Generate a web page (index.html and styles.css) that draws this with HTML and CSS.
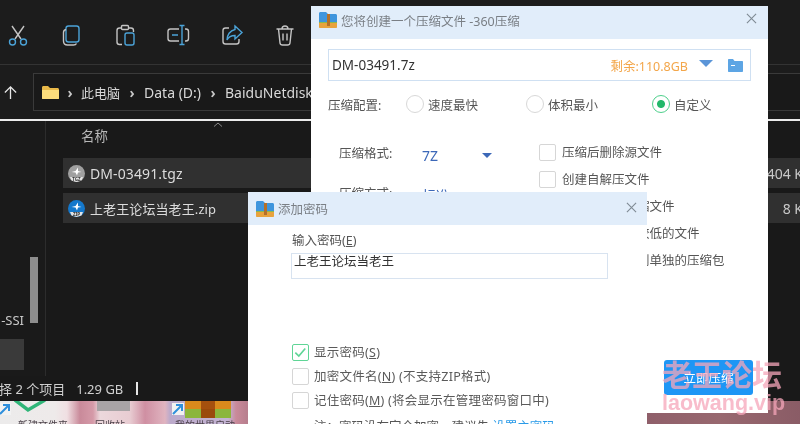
FILE: index.html
```html
<!DOCTYPE html>
<html lang="zh-CN">
<head>
  <meta charset="UTF-8">
  <title>添加密码</title>
  <link rel="stylesheet" href="styles.css">
</head>
<body>

  <div class="desktop">

    <!-- wallpaper and desktop shortcuts -->
    <svg class="wall-check" viewBox="0 0 32 14"><path d="M1 0 14 10 31 0" fill="none" stroke="#2fb578" stroke-width="3.500"/></svg>
    <div class="wall-icon wall-grey"></div>
    <div class="wall-icon wall-tile">
      <span class="t-orange"></span><span class="t-brown"></span><span class="t-orange"></span>
      <span class="t-green"></span><span class="t-brown2"></span><span class="t-green"></span>
    </div>
    <svg class="wall-arrow arrow-a" viewBox="0 0 12 12"><path d="M1 11 10 2M4 2h6v6" fill="none" stroke="#2f8fdc" stroke-width="2"/></svg>
    <svg class="wall-arrow arrow-b" viewBox="0 0 12 12"><path d="M1 11 10 2M4 2h6v6" fill="none" stroke="#2f8fdc" stroke-width="2"/></svg>
    <span class="wall-label label-a">新建文件夹</span>
    <span class="wall-label label-b">回收站</span>
    <span class="wall-label label-c">我的世界启动</span>

    <!-- explorer window -->
    <div class="explorer">
      <div class="toolbar">
        <svg class="tool" viewBox="0 0 24 24" fill="none" stroke-width="1.4">
          <path d="M6 3 15 16M18 3 9 16" stroke="#c4c4c4"/>
          <circle cx="6.5" cy="19" r="3" stroke="#4ba3d8"/>
          <circle cx="17.5" cy="19" r="3" stroke="#4ba3d8"/>
        </svg>
        <svg class="tool" viewBox="0 0 24 24" fill="none" stroke-width="1.4">
          <rect x="7" y="3" width="13" height="16" rx="2.5" stroke="#4ba3d8"/>
          <path d="M7 6.5C5 7 4.500 8 4.500 9.500V18c0 2.500 1.500 4 4 4h6c1.500 0 2.500-.5 3-1.500" stroke="#c4c4c4"/>
        </svg>
        <svg class="tool" viewBox="0 0 24 24" fill="none" stroke-width="1.4">
          <path d="M9 5H6.500C5 5 4 6 4 7.500V19c0 1.500 1 2.500 2.500 2.500H9M16 5h2c1.500 0 2.500 1 2.500 2.500V9" stroke="#c4c4c4"/>
          <rect x="8.500" y="2.500" width="7" height="4" rx="1" stroke="#c4c4c4"/>
          <rect x="12" y="10" width="9" height="12" rx="2" stroke="#4ba3d8"/>
        </svg>
        <svg class="tool" viewBox="0 0 24 24" fill="none" stroke-width="1.4">
          <path d="M13 6H4.500C3 6 2 7 2 8.500v7C2 17 3 18 4.500 18H13M19 6h1c1.500 0 2.500 1 2.500 2.500v7c0 1.500-1 2.500-2.500 2.500h-1" stroke="#c4c4c4"/>
          <path d="M16 3v18M13.500 2.500h5M13.500 21.500h5M6 12h6" stroke="#4ba3d8"/>
        </svg>
        <svg class="tool" viewBox="0 0 24 24" fill="none" stroke-width="1.4">
          <path d="M9 5H5.500C4 5 3 6 3 7.500v11C3 20 4 21 5.500 21h11c1.500 0 2.500-1 2.500-2.500V16" stroke="#c4c4c4"/>
          <path d="M15 3 22 9.500 15 16V12.500C11 12.500 8.500 14 7 17 7 12 10 7.500 15 6.500Z" stroke="#4ba3d8"/>
        </svg>
        <svg class="tool" viewBox="0 0 24 24" fill="none" stroke="#c4c4c4" stroke-width="1.4">
          <path d="M3.500 6h17M9 6c0-2 1-3 3-3s3 1 3 3M5.500 6 7 20c.2 1.500 1 2 2.500 2h5c1.500 0 2.300-.5 2.500-2L18.500 6M10 10.500v7M14 10.500v7"/>
        </svg>
      </div>

      <div class="addressrow">
        <svg class="up" viewBox="0 0 16 16" fill="none" stroke="#e6e6e6" stroke-width="1.4"><path d="M8 15V2M2 8l6-6 6 6"/></svg>
        <div class="addressbox">
          <svg class="folder" viewBox="0 0 17 13">
            <path d="M0 1.500C0 .6.600 0 1.500 0H6l2 2h7.500c.9 0 1.500.6 1.500 1.500V12c0 .6-.4 1-1 1H1c-.6 0-1-.4-1-1Z" fill="#e9b949"/>
            <path d="M0 4h17v8c0 .6-.4 1-1 1H1c-.6 0-1-.4-1-1Z" fill="#fbdc7c"/>
          </svg>
          <span class="crumb-sep first">›</span>
          <span class="crumb crumb-cn">此电脑</span>
          <span class="crumb-sep">›</span>
          <span class="crumb">Data (D:)</span>
          <span class="crumb-sep">›</span>
          <span class="crumb">BaiduNetdiskDownload</span>
        </div>
      </div>

      <div class="main">
        <div class="sidebar">
          <div class="side-col">
            <div class="side-label">-SSI</div>
            <div class="side-selected"></div>
          </div>
          <div class="side-scroll"></div>
        </div>

        <div class="list">
          <div class="list-head">
            <span class="col-name">名称</span>
            <svg class="sort" viewBox="0 0 10 5" fill="none" stroke="#8a8a8a"><path d="M1 4.500 5 1l4 3.500"/></svg>
          </div>
          <div class="file">
            <svg class="ficon" viewBox="0 0 17 17">
              <circle cx="8.500" cy="8.500" r="8.500" fill="#a0a0a0"/>
              <path d="M2 12h13l-1.500 3.500-5 1.500-5-1.500Z" fill="#e4e4e4"/>
              <path d="M10 2.500 7.500 6 3.500 7l4 .5 1.500 3 1-3 3.500-.5-3.500-1Z" fill="#fff"/>
              <text x="8.500" y="15.800" class="ficon-label">TGZ</text>
            </svg>
            <span class="fname">DM-03491.tgz</span>
            <span class="fsize">404 K</span>
          </div>
          <div class="file">
            <svg class="ficon" viewBox="0 0 17 17">
              <circle cx="8.500" cy="8.500" r="8.500" fill="#1478cc"/>
              <path d="M2 12h13l-1.500 3.500-5 1.500-5-1.500Z" fill="#e4e4e4"/>
              <path d="M10 2.500 7.500 6 3.500 7l4 .5 1.500 3 1-3 3.500-.5-3.500-1Z" fill="#fff"/>
              <text x="8.500" y="15.800" class="ficon-label">ZIP</text>
            </svg>
            <span class="fname fname-cn">上老王论坛当老王.zip</span>
            <span class="fsize">8 K</span>
          </div>
        </div>
      </div>

      <div class="status">
        <span class="st-count">选择 2 个项目</span>
        <span class="st-size">1.29 GB</span>
        <span class="st-bar"></span>
      </div>
    </div>

    <!-- 360 compress dialog -->
    <div class="dialog dialog-main">
      <div class="titlebar">
        <svg class="zipicon" viewBox="0 0 18 16">
          <path d="M0 1.500C0 .6.600 0 1.500 0H7l2 2h7.500c.9 0 1.500.6 1.500 1.500V10H0Z" fill="#3f95dd"/>
          <path d="M0 10h18v5c0 .6-.4 1-1 1H1c-.6 0-1-.4-1-1Z" fill="#e8a33d"/>
          <path d="M0 10h18v1H0Z" fill="#8fb84c"/>
          <rect x="8" y="2" width="3" height="12" fill="#b3702a"/>
        </svg>
        <span class="title">您将创建一个压缩文件 -360压缩</span>
        <svg class="close" viewBox="0 0 12 12" fill="none" stroke="#7f8a94" stroke-width="1.2"><path d="M1 1l10 10M11 1 1 11"/></svg>
      </div>
      <div class="dlg-body">
        <div class="pathbox">
          <span class="pathname">DM-03491.7z</span>
          <span class="free">剩余:110.8GB</span>
          <span class="caret-big"></span>
          <svg class="pathfolder" viewBox="0 0 15 13">
            <path d="M0 1c0-.6.400-1 1-1h4l1.500 2H14c.6 0 1 .4 1 1v9c0 .6-.4 1-1 1H1c-.6 0-1-.4-1-1Z" fill="#5da5e4"/>
            <path d="M3 6.500h4" stroke="#fff" stroke-width="1"/>
          </svg>
        </div>

        <div class="configrow">
          <span class="cfg-label">压缩配置:</span>
          <span class="radio"></span><span class="cfg-text-a">速度最快</span>
          <span class="radio"></span><span class="cfg-text-b">体积最小</span>
          <span class="radio radio-on"></span><span>自定义</span>
        </div>

        <div class="options">
          <div class="opt-left">
            <div class="opt-line">
              <span class="opt-label">压缩格式:</span>
              <span class="opt-value">7Z</span>
              <span class="caret-small"></span>
            </div>
            <div class="opt-line">
              <span class="opt-label">压缩方式:</span>
              <span class="opt-value">标准</span>
              <span class="caret-small"></span>
            </div>
          </div>
          <div class="opt-right">
            <label class="check-row"><span class="box"></span>压缩后删除源文件</label>
            <label class="check-row"><span class="box"></span>创建自解压文件</label>
            <label class="check-row"><span class="box"></span>压缩后校验压缩文件</label>
            <label class="check-row"><span class="box"></span>不压缩压缩率较低的文件</label>
            <label class="check-row"><span class="box"></span>每个文件压缩到单独的压缩包</label>
            <label class="check-row"><span class="box"></span>加密压缩包(W)</label>
          </div>
        </div>

        <button class="go">立即压缩</button>
      </div>
    </div>

    <!-- password dialog -->
    <div class="dialog dialog-pass">
      <div class="titlebar">
        <svg class="zipicon" viewBox="0 0 18 16">
          <path d="M0 1.500C0 .6.600 0 1.500 0H7l2 2h7.500c.9 0 1.500.6 1.500 1.500V10H0Z" fill="#3f95dd"/>
          <path d="M0 10h18v5c0 .6-.4 1-1 1H1c-.6 0-1-.4-1-1Z" fill="#e8a33d"/>
          <path d="M0 10h18v1H0Z" fill="#8fb84c"/>
          <rect x="8" y="2" width="3" height="12" fill="#b3702a"/>
        </svg>
        <span class="title">添加密码</span>
        <svg class="close" viewBox="0 0 12 12" fill="none" stroke="#7f8a94" stroke-width="1.2"><path d="M1 1l10 10M11 1 1 11"/></svg>
      </div>
      <div class="pass-body">
        <div class="pass-label">输入密码(<u>E</u>)</div>
        <div class="pass-input">上老王论坛当老王</div>
        <label class="pass-row pass-first"><span class="box box-on">
          <svg viewBox="0 0 12 12" fill="none" stroke="#5fd596" stroke-width="1.400"><path d="M2 6.500 5 9.500 10.500 3"/></svg>
        </span>显示密码(<u>S</u>)</label>
        <label class="pass-row"><span class="box"></span>加密文件名(<u>N</u>) (不支持ZIP格式)</label>
        <label class="pass-row"><span class="box"></span>记住密码(<u>M</u>) (将会显示在管理密码窗口中)</label>
        <div class="pass-note">注：密码没有完全加密，建议先 <span class="link">设置主密码</span></div>
      </div>
    </div>

    <!-- site watermark -->
    <div class="watermark">
      <div class="wm-cn">老王论坛</div>
      <div class="wm-en">laowang.vip</div>
    </div>

  </div>

</body>
</html>
```

FILE: styles.css
```css
* {
  box-sizing: border-box;
  margin: 0;
  padding: 0;
}

body {
  width: 800px;
  height: 424px;
  overflow: hidden;
  font-family: "Noto Sans", "Noto Sans CJK SC", sans-serif;
}

.desktop {
  position: relative;
  width: 800px;
  height: 424px;
  overflow: hidden;
  filter: blur(0.35px);
  background: linear-gradient(90deg, #ecebeb 0, #eeeaea 55px, #f0dfe2 67px, #c98a9a 80px, #d59aa8 93px, #ecd8dc 100px, #e8ccd2 130px, #cf8fa2 145px, #e0b4c0 165px, #bcaacb 170px, #c4b4d4 228px, #c98a9a 236px, #b87f8e 247px, #8f5f6a 647px, #98686f 720px, #8a5c66 800px);
}

/* wallpaper bits */
.wall-icon {
  position: absolute;
}

.wall-check {
  position: absolute;
  left: 14px;
  top: 400px;
  width: 32px;
  height: 14px;
}

.wall-grey {
  left: 97px;
  top: 401px;
  width: 33px;
  height: 10px;
  background: #a8a4a6;
}

.wall-tile {
  left: 185px;
  top: 401px;
  width: 46px;
  height: 17px;
  display: grid;
  grid-template-columns: 1fr 14px 1fr;
  grid-template-rows: 8px 9px;
}

.t-orange { background: #d98a1c; }
.t-brown { background: #a5500e; }
.t-green { background: #8bb63c; }
.t-brown2 { background: #9a4a0c; }

.wall-arrow {
  position: absolute;
  top: 403px;
  width: 12px;
  height: 12px;
  background: #f2f2f2;
}

.arrow-a { left: -1px; }
.arrow-b { left: 172px; }

.wall-label {
  position: absolute;
  top: 418px;
  font-size: 10px;
  line-height: 14px;
  color: #4a4048;
  white-space: nowrap;
}

.label-a { left: 18px; }
.label-b { left: 95px; }
.label-c { left: 175px; }

/* explorer */
.explorer {
  position: absolute;
  left: 0;
  top: 0;
  width: 800px;
  height: 401px;
  display: flex;
  flex-direction: column;
  background-color: #191919;
  color: #dedede;
  font-size: 14px;
}

.toolbar {
  height: 65px;
  flex-shrink: 0;
  display: flex;
  align-items: center;
  gap: 29.4px;
  padding: 6px 0 0 6px;
  background-color: #1c1c1c;
  border-bottom: 1px solid #333;
}

.tool {
  width: 24px;
  height: 24px;
}

.addressrow {
  height: 56px;
  flex-shrink: 0;
  display: flex;
  align-items: center;
  padding-left: 3px;
  background-color: #1c1c1c;
  border-bottom: 2px solid #ececec;
}

.up {
  width: 15px;
  height: 15px;
  flex-shrink: 0;
  margin-right: 15px;
}

.addressbox {
  width: 790px;
  flex-shrink: 0;
  height: 38px;
  display: flex;
  align-items: center;
  padding-left: 8px;
  border: 1px solid #3a3a3a;
  background-color: #191919;
  white-space: nowrap;
}

.folder {
  width: 17px;
  height: 13px;
}

.crumb {
  color: #d8d8d8;
}

.crumb-cn {
  font-size: 13px;
}

.crumb-sep {
  width: 24px;
  text-align: center;
  color: #c8c8c8;
  font-weight: bold;
}

.crumb-sep.first {
  width: 22px;
}

.main {
  flex: 1;
  display: flex;
  min-height: 0;
}

.sidebar {
  width: 46px;
  flex-shrink: 0;
  display: flex;
  border-right: 1px solid #2c2c2c;
  background-color: #1a1a1a;
}

.side-col {
  width: 24px;
  padding-top: 190px;
  overflow: hidden;
}

.side-label {
  height: 18px;
  line-height: 18px;
  text-align: right;
  font-size: 13px;
  color: #c8c8c8;
  white-space: nowrap;
}

.side-selected {
  height: 31px;
  margin-top: 10px;
  background-color: #3a3a3a;
}

.side-scroll {
  width: 8px;
  height: 66px;
  margin: 136px 0 0 6px;
  background-color: #8e8e8e;
}

.list {
  flex: 1;
  min-width: 0;
  padding-left: 17px;
  margin-right: -3px;
}

.list-head {
  height: 37px;
  display: flex;
  color: #b8b8b8;
  font-size: 13.5px;
}

.col-name {
  width: 150px;
  padding: 5px 0 0 18px;
  line-height: 20px;
}

.sort {
  width: 10px;
  height: 5px;
  margin-top: 1px;
}

.file {
  height: 30px;
  margin-bottom: 5px;
  display: flex;
  align-items: center;
  padding: 0 0 0 5px;
  background-color: #303030;
}

.ficon {
  width: 17px;
  height: 17px;
  margin-right: 5px;
}

.ficon-label {
  font-size: 4.5px;
  font-weight: bold;
  fill: #333;
  text-anchor: middle;
}

.fname {
  flex: 1;
  color: #dcdcdc;
  letter-spacing: 0.1px;
  white-space: nowrap;
}

.fname-cn {
  font-size: 13px;
}

.fsize {
  color: #c8c8c8;
}

.status {
  height: 25px;
  flex-shrink: 0;
  display: flex;
  align-items: center;
  background-color: #191919;
  color: #d0d0d0;
  font-size: 13px;
  white-space: nowrap;
}

.st-count {
  margin-left: -14px;
}

.st-size {
  margin-left: 11px;
}

.st-bar {
  width: 1.500px;
  height: 13px;
  margin-left: 13px;
  background-color: #e6e6e6;
}

/* dialogs */
.dialog {
  position: absolute;
  background-color: #fff;
  color: #555;
  font-size: 12.5px;
  display: flex;
  flex-direction: column;
}

.dialog-main {
  left: 311px;
  top: 6px;
  width: 457px;
  height: 407px;
}

.dialog-pass {
  left: 248px;
  top: 192px;
  width: 399px;
  height: 260px;
}

.titlebar {
  height: 33px;
  flex-shrink: 0;
  display: flex;
  align-items: center;
  padding-left: 8px;
  background-color: #e1edfa;
}

.dialog-main .titlebar {
  padding-bottom: 5px;
}

.zipicon {
  width: 18px;
  height: 16px;
  margin-right: 4px;
}

.title {
  flex: 1;
  color: #7a7f85;
  white-space: nowrap;
}

.dialog-pass .title {
  margin-top: -1px;
}

.close {
  width: 11px;
  height: 11px;
  margin: -2px 11px 0 0;
}

.dialog-main .close {
  margin-top: -4px;
}

.dialog-pass .close {
  margin-right: 10px;
}

.dlg-body {
  flex: 1;
  display: flex;
  flex-direction: column;
  padding: 10px 15px 18px 17px;
  min-height: 0;
}

.pathbox {
  height: 32px;
  margin-right: 2px;
  display: flex;
  align-items: center;
  padding: 0 7px 0 3px;
  border: 1px solid #cfe0f2;
}

.pathname {
  flex: 1;
  font-size: 13.5px;
  color: #333;
}

.free {
  font-size: 12.5px;
  color: #f3a64a;
}

.caret-big {
  width: 0;
  height: 0;
  margin: -3px 0 0 11px;
  border-left: 7px solid transparent;
  border-right: 7px solid transparent;
  border-top: 7px solid #5b95d8;
}

.pathfolder {
  width: 15px;
  height: 13px;
  margin-left: 15px;
}

.configrow {
  height: 20px;
  margin-top: 13px;
  display: flex;
  align-items: center;
  color: #555;
  white-space: nowrap;
}

.cfg-label {
  width: 78px;
}

.radio {
  width: 18px;
  height: 18px;
  margin-right: 4px;
  border: 1px solid #d8d8d8;
  border-radius: 50%;
  background-color: #fff;
}

.radio-on {
  border: 1px solid #4fd08c;
  background: radial-gradient(circle, #22b86a 0, #22b86a 3.5px, #fff 4.5px);
}

.cfg-text-a {
  width: 98px;
}

.cfg-text-b {
  width: 104px;
}

.options {
  margin-top: 30px;
  display: flex;
  flex: 1;
  min-height: 0;
}

.opt-left {
  width: 211px;
  padding-left: 11px;
}

.opt-line {
  height: 17px;
  margin-bottom: 23px;
  display: flex;
  align-items: center;
}

.opt-label {
  width: 83px;
}

.opt-value {
  width: 60px;
  margin-top: 5px;
  font-size: 14px;
  line-height: 17px;
  color: #3c68b8;
}

.caret-small {
  width: 0;
  height: 0;
  margin-top: 5px;
  border-left: 5px solid transparent;
  border-right: 5px solid transparent;
  border-top: 5px solid #3c68b8;
}

.check-row {
  height: 27px;
  display: flex;
  align-items: flex-start;
  line-height: 17px;
  white-space: nowrap;
}

.box {
  width: 17px;
  height: 17px;
  flex-shrink: 0;
  margin-right: 6px;
  border: 1px solid #d6d6d6;
  border-radius: 2px;
  background-color: #fff;
}

.box-on {
  border: 1.500px solid #5fd596;
}

.go {
  align-self: flex-end;
  width: 89px;
  height: 35px;
  border: none;
  border-radius: 3px;
  background-color: #1e96f5;
  color: #fff;
  font-family: inherit;
  font-size: 12.5px;
}

.pass-body {
  padding: 7px 0 0 44px;
}

.pass-label {
  height: 18px;
  line-height: 18px;
  color: #555;
}

.pass-input {
  width: 317px;
  height: 26px;
  margin: 3px 0 0 -1px;
  padding-left: 2px;
  line-height: 16px;
  border: 1px solid #d8e3f0;
  color: #333;
}

.pass-row {
  height: 24px;
  display: flex;
  align-items: flex-start;
  line-height: 17px;
  letter-spacing: 0.25px;
  white-space: nowrap;
  color: #5a5a5a;
}

.pass-row .box {
  margin-right: 5px;
}

.pass-first {
  margin-top: 65px;
}

.box-on svg {
  display: block;
  width: 14px;
  height: 14px;
}

.pass-note {
  padding-left: 22px;
  margin-top: 2px;
  line-height: 17px;
  white-space: nowrap;
}

.link {
  color: #2a9be8;
}

/* watermark over everything */
.watermark {
  position: absolute;
  left: 662px;
  top: 353px;
  width: 125px;
  font-weight: bold;
  color: rgba(245, 165, 185, 0.75);
  white-space: nowrap;
  filter: blur(0.5px);
}

.wm-cn {
  font-size: 30px;
  line-height: 40px;
  font-family: "Noto Sans CJK SC", sans-serif;
}

.wm-en {
  font-size: 21.5px;
  line-height: 20px;
  font-family: "Liberation Sans", sans-serif;
}
```
